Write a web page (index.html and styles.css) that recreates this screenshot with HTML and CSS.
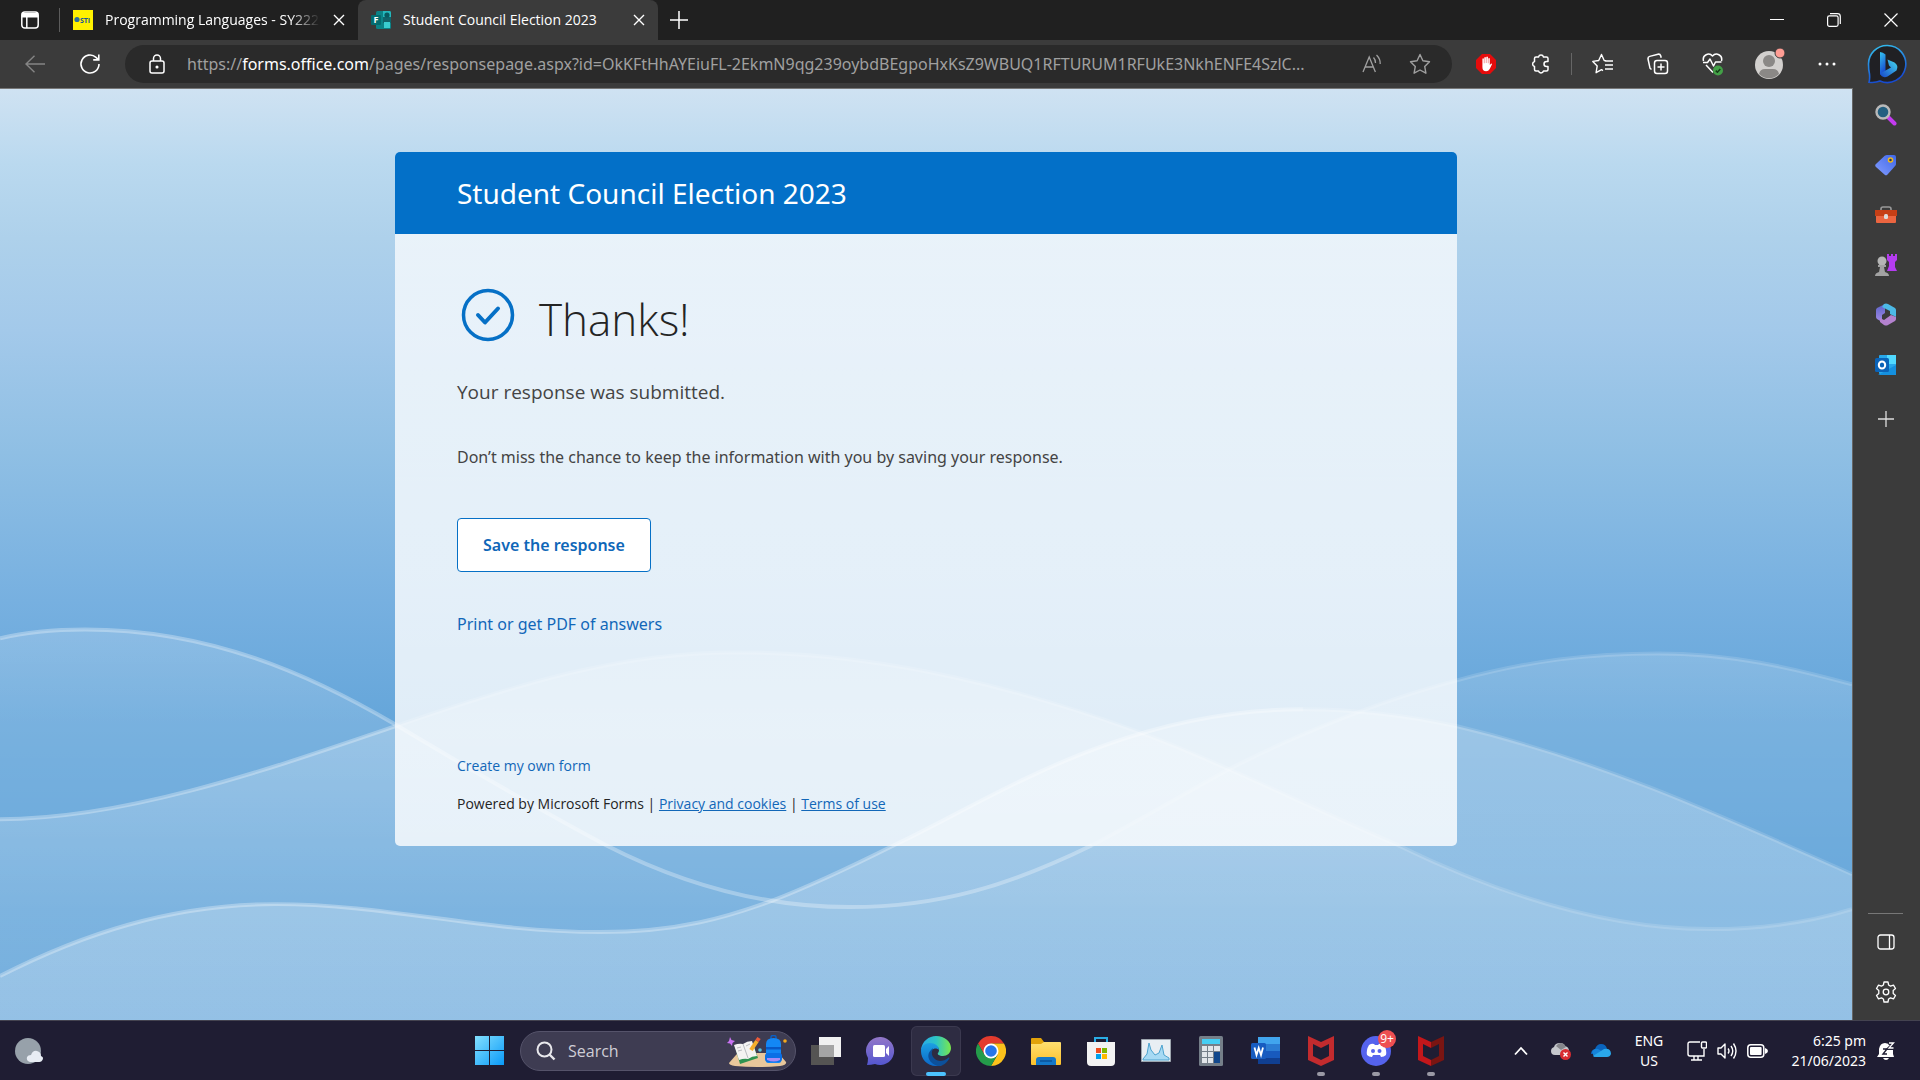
FILE: index.html
```html
<!DOCTYPE html>
<html lang="en">
<head>
<meta charset="utf-8">
<title>Student Council Election 2023</title>
<link rel="stylesheet" href="styles.css">
</head>
<body>
<header class="tabbar">
  <button class="icon-btn tab-actions" aria-label="Tab actions menu"><svg width="20" height="20" viewBox="0 0 20 20" fill="none" stroke="#fff" stroke-width="1.5"><rect x="1.8" y="2" width="16.4" height="16" rx="3"/><path d="M2 4.5h16M2 6h16" stroke-width="3"/><path d="M6.8 7v11"/></svg></button>
  <div class="tab">
    <svg width="20" height="20" viewBox="0 0 20 20"><path fill="#fff100" d="M0 0h20v20H0z"/><circle cx="4" cy="9.500" r="2.600" fill="#2a6e9c"/><text x="12" y="13" class="sti">STI</text></svg>
    <span class="tab-title fade">Programming Languages - SY222</span>
    <button class="icon-btn close" aria-label="Close tab"><svg width="12" height="12" viewBox="0 0 12 12" stroke="#fff" stroke-width="1.4"><path d="M1 1l10 10M11 1L1 11"/></svg></button>
  </div>
  <div class="tab active">
    <svg width="20" height="20" viewBox="0 0 20 20"><rect x="5" y="1" width="15" height="18" rx="1.5" fill="#0b8387"/><path fill="#25b7bc" d="M12 1h6.500q1.500 0 1.500 1.500V7h-8z"/><path fill="#10646b" d="M12 7h8v6h-8z"/><circle cx="16" cy="5" r="2.600" fill="#075a61"/><rect x="13" y="12" width="6" height="6" fill="#39cdd0"/><rect y="5" width="10" height="10" rx="1" fill="#036c70"/><text x="5" y="13" class="glyph">F</text></svg>
    <span class="tab-title">Student Council Election 2023</span>
    <button class="icon-btn close" aria-label="Close tab"><svg width="12" height="12" viewBox="0 0 12 12" stroke="#fff" stroke-width="1.4"><path d="M1 1l10 10M11 1L1 11"/></svg></button>
  </div>
  <button class="icon-btn new-tab" aria-label="New tab"><svg width="18" height="18" viewBox="0 0 18 18" stroke="#fff" stroke-width="1.5"><path d="M9 0v18M0 9h18"/></svg></button>
  <div class="window-controls">
    <button class="icon-btn" aria-label="Minimize"><svg width="14" height="14" viewBox="0 0 14 14"><path d="M0 6.500h14" stroke="#fff"/></svg></button>
    <button class="icon-btn" aria-label="Restore"><svg width="14" height="14" viewBox="0 0 14 14" fill="none" stroke="#fff" stroke-width="1.200"><rect x=".6" y="2.800" width="10.500" height="10.500" rx="1.800"/><path d="M3 .7h7.500q2.800 0 2.800 2.800V11"/></svg></button>
    <button class="icon-btn" aria-label="Close"><svg width="14" height="14" viewBox="0 0 14 14" stroke="#fff" stroke-width="1.200"><path d="M.5.5l13 13M13.500.5l-13 13"/></svg></button>
  </div>
</header>

<nav class="toolbar" aria-label="Browser toolbar">
  <button class="icon-btn back" aria-label="Back"><svg width="20" height="18" viewBox="0 0 20 18" fill="none" stroke="#858585" stroke-width="1.400"><path d="M20 9H1M9.500.8L1 9l8.500 8.200"/></svg></button>
  <button class="icon-btn" aria-label="Refresh"><svg width="22" height="22" viewBox="0 0 22 22" fill="none" stroke="#fff" stroke-width="1.600"><path d="M20 11a9 9 0 1 1-3-6.700l2.500 2.400M19.800 1.500v5.400h-5.600"/></svg></button>
  <div class="address">
    <button class="icon-btn" aria-label="View site information"><svg width="16" height="20" viewBox="0 0 16 20" fill="none" stroke="#fff" stroke-width="1.500"><rect x="1" y="7" width="14" height="12" rx="2"/><path d="M4.500 7V4.500a3.500 3.500 0 0 1 7 0V7"/><circle cx="8" cy="13" r=".8" fill="#fff"/></svg></button>
    <div class="url" role="textbox" aria-label="Address">https://<b>forms.office.com</b>/pages/responsepage.aspx?id=OkKFtHhAYEiuFL-2EkmN9qg239oybdBEgpoHxKsZ9WBUQ1RFTURUM1RFUkE3NkhENFE4SzlC...</div>
    <button class="icon-btn" aria-label="Read aloud"><svg width="20" height="20" viewBox="0 0 20 20" fill="none" stroke="#a0a0a0" stroke-width="1.300"><path d="M1 18L7.200 3l6.200 15M3 13h8.500M11.500 3.500q2.200 2.500 2 5.500M14.500 1q4 4 3.700 9"/></svg></button>
    <button class="icon-btn" aria-label="Add to favorites"><svg width="22" height="22" viewBox="0 0 22 22" fill="none" stroke="#a0a0a0" stroke-width="1.400" stroke-linejoin="round"><path d="M11 1.500l2.900 6.300 6.600.9-4.800 4.700 1.200 6.800L11 17l-5.900 3.200 1.200-6.800L1.500 8.700l6.600-.9z"/></svg></button>
  </div>
  <div class="tools">
    <button class="icon-btn" aria-label="AdBlock"><svg width="20" height="24" viewBox="0 0 20 24"><path fill="#e50c0c" d="M6 2h8l6 6v8l-6 6H6l-6-6V8z"/><path fill="#fff" d="M6.400 8.500V6.700q.7-.9 1.500 0v4.500h.4V5.500q.8-.9 1.600 0v5.500h.4V5q.8-.9 1.600 0v6.200h.4V6.500q.8-.8 1.500 0V13l1.200-1.300q1-.4 1 .5L13.700 17q-1.200 2.300-3.600 2.300-3.700 0-3.700-4.300z"/></svg></button>
    <button class="icon-btn" aria-label="Extensions"><svg width="20" height="22" viewBox="0 0 20 22" fill="none" stroke="#fff" stroke-width="1.500" stroke-linejoin="round"><path d="M5 4h2.500a2.600 2.600 0 0 1 5 0H15.500q1.500 0 1.500 1.500V8.500h-1.500a2.500 2.500 0 1 0 0 5H17v3q0 1.500-1.500 1.500h-3a2.600 2.600 0 0 1-5 0H5q-1.500 0-1.500-1.500v-3a2.600 2.600 0 0 1 0-5v-3Q3.500 4 5 4z"/></svg></button>
    <span class="divider"></span>
    <button class="icon-btn" aria-label="Favorites"><svg width="22" height="22" viewBox="0 0 22 22" fill="none" stroke="#fff" stroke-width="1.400" stroke-linejoin="round"><path d="M14 7.800L12.200 7.500 9.500 1.500 6.700 7.500l-5.900.9 4.400 4.500-1.100 6.800 5.400-3 1.500.9M13 8h8M13 12h8M13 16h8"/></svg></button>
    <button class="icon-btn" aria-label="Collections"><svg width="22" height="22" viewBox="0 0 22 22" fill="none" stroke="#fff" stroke-width="1.500" stroke-linejoin="round"><rect x="7.500" y="7.500" width="13" height="13" rx="2.500"/><path d="M14 10.500v7M10.500 14h7M4.500 16.500L3 15.200 1 6q-.3-2 1.700-2.600L11 1.200q2-.4 2.700 1.500l.5 2"/></svg></button>
    <button class="icon-btn" aria-label="Browser essentials"><svg width="22" height="24" viewBox="0 0 22 24" fill="none" stroke="#fff" stroke-width="1.500" stroke-linejoin="round"><path d="M1.500 9C0 3 7 0 10.500 4 14 0 21 3 19.500 9M1 10.500h4.500L8 7l3.500 7 2-4h6M4 13l7 7.500"/><circle cx="16" cy="18.500" r="5" fill="#43a047" stroke="none"/><path stroke="#173d19" d="M13.800 18.600l1.600 1.600 2.900-3.200"/></svg></button>
    <button class="icon-btn profile" aria-label="Profile"><svg width="30" height="34" viewBox="0 0 30 34"><circle cx="14" cy="18" r="14" fill="#d2d0ce"/><circle cx="14" cy="14" r="6" fill="#8a8886"/><path d="M4 27q1-5 6-5h8q5 0 6 5a14 14 0 0 1-20 0z" fill="#8a8886"/><circle cx="25" cy="6" r="5" fill="#ff9d94" stroke="#3b3b3b"/></svg></button>
    <button class="icon-btn" aria-label="Settings and more"><svg width="18" height="4" viewBox="0 0 18 4" fill="#fff"><circle cx="2" cy="2" r="1.500"/><circle cx="9" cy="2" r="1.500"/><circle cx="16" cy="2" r="1.500"/></svg></button>
  </div>
  <button class="icon-btn bing" aria-label="Discover"><svg width="40" height="40" viewBox="0 0 40 40"><defs><linearGradient id="bg1" x1="0" y1="0" x2=".3" y2="1"><stop offset="0" stop-color="#35c5f0"/><stop offset="1" stop-color="#174bd0"/></linearGradient><linearGradient id="bg2" x1="0" y1="1" x2="1" y2="0"><stop offset="0" stop-color="#1746c9"/><stop offset="1" stop-color="#45d9ee"/></linearGradient></defs><path d="M20 1.500A18.500 18.500 0 1 1 13 37Q8 39 2 38.200 3 35 2.500 30 1.500 26 1.500 20A18.500 18.500 0 0 1 20 1.500z" fill="#202024" stroke="url(#bg1)" stroke-width="1.600"/><path d="M13 8q3 0 5.500 2.500V27L13 31z" fill="url(#bg1)"/><path d="M20.500 15.500l7 3q4.500 3 2 8l-9 6q-3.500 1.500-6-.5L13 29.500l11-6-2-2z" fill="url(#bg2)"/></svg></button>
</nav>

<div class="workspace">
  <main class="page">
    <svg class="waves" viewBox="0 88 1852 932" preserveAspectRatio="none" aria-hidden="true">
      <defs>
        <linearGradient id="wa" gradientUnits="userSpaceOnUse" x1="0" y1="630" x2="0" y2="910"><stop offset="0" stop-color="#fff" stop-opacity=".18"/><stop offset="1" stop-color="#fff" stop-opacity=".02"/></linearGradient>
        <linearGradient id="wb" gradientUnits="userSpaceOnUse" x1="0" y1="650" x2="0" y2="1020"><stop offset="0" stop-color="#fff" stop-opacity=".14"/><stop offset=".2" stop-color="#fff" stop-opacity=".25"/><stop offset=".8" stop-color="#fff" stop-opacity=".12"/><stop offset="1" stop-color="#fff" stop-opacity=".08"/></linearGradient>
        <linearGradient id="wc" gradientUnits="userSpaceOnUse" x1="0" y1="710" x2="0" y2="1020"><stop offset="0" stop-color="#fff" stop-opacity=".26"/><stop offset="1" stop-color="#fff" stop-opacity=".23"/></linearGradient>
      </defs>
      <path fill="url(#wa)" d="M0 638C28 631 56 629 85 629 210 629 310 674 395 724 470 769 540 810 606 845 690 888 770 907 850 907 940 907 1010 885 1092 845 1140 820 1190 790 1229 769 1290 737 1380 700 1457 680 1530 660 1590 653 1658 653 1730 653 1790 667 1852 684V1020H0z"/>
      <path fill="url(#wb)" d="M0 819C130 819 280 765 395 726 520 683 620 652 735 652 890 652 1030 692 1137 731 1170 743 1200 756 1229 769 1290 796 1340 820 1398 845 1490 890 1600 929 1710 929 1760 929 1810 922 1852 909V1020H0z"/>
      <path fill="url(#wc)" d="M0 976C80 935 170 904 276 904 390 904 480 932 600 932 680 932 730 916 771 901 820 882 860 862 894 845 990 800 1120 709 1303 709 1360 709 1410 716 1457 726 1600 760 1720 815 1852 874V1020H0z"/>
      <g class="crest">
        <path d="M0 638C28 631 56 629 85 629 210 629 310 674 395 724 470 769 540 810 606 845 690 888 770 907 850 907 940 907 1010 885 1092 845"/>
        <path d="M0 819C130 819 280 765 395 726"/>
        <path d="M0 976C80 935 170 904 276 904 390 904 480 932 600 932 680 932 730 916 771 901 820 882 860 862 894 845 990 800 1120 709 1303 709"/>
      </g>
      <g class="crest faint">
        <path d="M1092 845C1140 820 1190 790 1229 769 1290 737 1380 700 1457 680 1530 660 1590 653 1658 653 1730 653 1790 667 1852 684"/>
        <path d="M395 726C520 683 620 652 735 652 890 652 1030 692 1137 731 1170 743 1200 756 1229 769 1290 796 1340 820 1398 845 1490 890 1600 929 1710 929 1760 929 1810 922 1852 909"/>
        <path d="M1303 709C1360 709 1410 716 1457 726 1600 760 1720 815 1852 874"/>
      </g>
    </svg>
    <article class="card">
      <h1 class="card-title">Student Council Election 2023</h1>
      <section class="card-body">
        <div class="thanks"><svg width="62" height="62" viewBox="0 0 62 62" fill="none" stroke="#0670c6"><circle cx="31" cy="31" r="24.500" stroke-width="3.500"/><path d="M21 31l7 7.500 13-14" stroke-width="4" stroke-linecap="round" stroke-linejoin="round"/></svg><h2>Thanks!</h2></div>
        <p class="submitted">Your response was submitted.</p>
        <p class="note">Don’t miss the chance to keep the information with you by saving your response.</p>
        <button class="save">Save the response</button>
        <a class="print" href="#print">Print or get PDF of answers</a>
        <footer class="card-footer">
          <a class="create" href="#create">Create my own form</a>
          <p>Powered by Microsoft Forms | <a href="#privacy">Privacy and cookies</a> | <a href="#terms">Terms of use</a></p>
        </footer>
      </section>
    </article>
  </main>

  <aside class="sidebar" aria-label="Sidebar">
    <button class="icon-btn" aria-label="Search"><svg width="22" height="22" viewBox="0 0 22 22"><path d="M13.500 13.500l6 6" stroke="#c43bf0" stroke-width="4" stroke-linecap="round"/><circle cx="8" cy="8" r="6.500" fill="#235f80" stroke="#b9b9b9" stroke-width="2.400"/></svg></button>
    <button class="icon-btn" aria-label="Shopping"><svg width="22" height="22" viewBox="0 0 22 22"><defs><linearGradient id="tg" x1="1" y1="0" x2="0" y2="1"><stop stop-color="#3f68e8"/><stop offset="1" stop-color="#839cff"/></linearGradient></defs><path fill="url(#tg)" d="M12 1h7q2 0 2 2v7q0 1-.7 1.700l-8 9q-1.300 1-2.600 0l-9-8q-1-1.200 0-2.400l9-8.500Q11 1 12 1z"/><circle cx="15.500" cy="6" r="2" fill="#24345c" stroke="#f0b91b" stroke-width="1.500"/></svg></button>
    <button class="icon-btn" aria-label="Tools"><svg width="24" height="20" viewBox="0 0 24 20"><path d="M7 7V4q0-2 2-2h6q2 0 2 2v3" fill="none" stroke="#999" stroke-width="1.600"/><rect x="2" y="6" width="20" height="12" rx="1" fill="#eb6540"/><path fill="#c63f16" d="M1 5h22v6H1z"/><rect x="10" y="9" width="4" height="5" rx="1.500" fill="#dcdcdc"/></svg></button>
    <button class="icon-btn" aria-label="Games"><svg width="24" height="24" viewBox="0 0 24 24"><path fill="#b43cf0" d="M13 1h2v2h2V1h2v2h2V1h2v6l-2 2v5l2 4H13l2-5V9l-2-2z"/><circle cx="8" cy="8" r="4.500" fill="#b5b5b5"/><path fill="#a2a2a2" d="M4 12h8v2h-2l1 5q4 1 4 4H1q0-3 4-4l1-5H4z"/></svg></button>
    <button class="icon-btn" aria-label="Microsoft 365"><svg width="22" height="24" viewBox="0 0 22 24"><defs><linearGradient id="m1" x1="0" y1="0" x2="0" y2="1"><stop stop-color="#5a62c9"/><stop offset="1" stop-color="#a48be6"/></linearGradient></defs><path fill="url(#m1)" d="M10 1v9l-3 2v7l-5-3q-1-1-1-2V7q0-1 1-2z"/><path fill="#4cb9e6" d="M9 1q2-1 4 0l7 4q1 1 1 2v7l-6-3V8L7 4z"/><path fill="#b482cf" d="M21 14v2q0 1-1 2l-7 4q-2 1-4 0l-4-3v-4l4 2 7-5z"/></svg></button>
    <button class="icon-btn" aria-label="Outlook"><svg width="22" height="22" viewBox="0 0 22 22"><rect x="4" y="1" width="17" height="19" rx="1" fill="#28a8ea"/><path fill="#50d9ff" d="M12 1h9v9h-9z"/><path fill="#1490df" d="M3 21l18-10v10z"/><rect y="4" width="14" height="14" rx="1.500" fill="#0a63b8"/><ellipse cx="7" cy="11" rx="3.200" ry="3.600" fill="none" stroke="#fff" stroke-width="2"/></svg></button>
    <button class="icon-btn customize" aria-label="Customize"><svg width="16" height="16" viewBox="0 0 16 16" stroke="#ddd" stroke-width="1.300"><path d="M8 0v16M0 8h16"/></svg></button>
    <div class="sidebar-end">
      <button class="icon-btn" aria-label="Hide sidebar"><svg width="18" height="16" viewBox="0 0 18 16" fill="none" stroke="#fff" stroke-width="1.300"><rect x="1" y="1" width="16" height="14" rx="2.500"/><path d="M12.500 1v14"/></svg></button>
      <button class="icon-btn" aria-label="Settings"><svg width="22" height="22" viewBox="0 0 22 22" fill="none" stroke="#fff" stroke-width="1.300" stroke-linejoin="round"><path d="M9 1h4l.6 3 1.900 1.100 3-1 2 3.400L18.200 9.500v3l2.300 2-2 3.400-3-1L13.600 18 13 21H9l-.6-3-1.900-1.100-3 1-2-3.400 2.300-2v-3l-2.300-2 2-3.400 3 1L8.400 4z"/><circle cx="11" cy="11" r="2.800"/></svg></button>
    </div>
  </aside>
</div>

<footer class="taskbar">
  <div class="task-left"><button class="icon-btn" aria-label="Widgets"><svg width="30" height="30" viewBox="0 0 30 30"><circle cx="14" cy="15" r="13" fill="#97a1aa"/><path fill="#e8edf4" d="M16 26q-4-1-3-5 1-2 4-2 2-5 6-4 4 1 4 5 3 1 1.500 4-1 2-3 2z"/></svg></button></div>
  <div class="task-center">
    <button class="icon-btn start" aria-label="Start"><svg width="29" height="29" viewBox="0 0 29 29"><defs><linearGradient id="ws" x1="0" y1="0" x2="1" y2="1"><stop stop-color="#83e0ff"/><stop offset="1" stop-color="#0a9af8"/></linearGradient></defs><path fill="url(#ws)" d="M0 0h14v14H0zM15 0h14v14H15zM0 15h14v14H0zM15 15h14v14H15z"/></svg></button>
    <label class="search">
      <svg width="20" height="20" viewBox="0 0 20 20" fill="none" stroke="#e8e8ec" stroke-width="2"><circle cx="8.500" cy="8.500" r="7"/><path d="M13.500 13.500l5 5" stroke-width="2.400"/></svg>
      <input type="text" placeholder="Search" aria-label="Search">
      <svg width="60" height="32" viewBox="0 0 60 32"><path fill="#e8c79b" d="M2 28L9 20q1-2 4-2h36q3 0 4 2l6 7q1 3-6 4Q30 33 8 31q-6-1-6-3z"/><path fill="#2f9350" d="M8 12l18-3 5 14-18 6z"/><path fill="#f4f3f2" d="M7 10q5-2 9-1 4-3 9-3l5 15q-5 0-9 3-4-1-9 1z"/><path stroke="#b9bcc0" fill="none" d="M16 9l5 14M10 13l4-1M11 16l4-1M19 11l4-2"/><path stroke="#f4ad2b" stroke-width="4" d="M24 15l6-9"/><path stroke="#ec5b3a" stroke-width="4" d="M30 6l2-3"/><path fill="none" stroke="#0b5ec4" stroke-width="1.500" d="M44 4V2q0-1.500 2.500-1.500T49 2v2"/><path fill="#1387f5" d="M39 9q0-6 7.500-6T54 9v17q0 2-2 2H41q-2 0-2-2z"/><path fill="#0858c6" d="M39 12h15v2.500H39z"/><rect x="38" y="18" width="17" height="9" rx="3" fill="#0b6fe6"/><path fill="#a68bf5" d="M40 23h13v2q-6 3-13 0z"/><path fill="#c973f2" d="M3 2l1.500 3L8 6 5.500 8 5 11 3 8.500 0 8l2-2z"/><circle cx="33" cy="15" r="1.800" fill="#56c1df"/><circle cx="58" cy="6" r="1.800" fill="#f3a91d"/></svg>
    </label>
    <div class="apps">
      <button class="app" aria-label="Task view"><svg width="30" height="30" viewBox="0 0 30 30"><path fill="#555453" d="M0 9h23v20H0z"/><path fill="#f1f1f1" d="M8 1h22v20H8z"/><path fill="#a5a5a5" d="M8 9h15v12H8z"/></svg></button>
      <button class="app" aria-label="Chat"><svg width="30" height="30" viewBox="0 0 30 30"><defs><linearGradient id="ch" x1="0" y1="0" x2="0" y2="1"><stop stop-color="#9377c8"/><stop offset="1" stop-color="#5457d0"/></linearGradient></defs><path fill="url(#ch)" d="M15 1A14 14 0 1 1 9 28q-4 1-8 1 1-3 1-7A14 14 0 0 1 15 1z"/><rect x="7" y="9" width="12" height="12" rx="1.500" fill="#fff"/><path fill="#fff" d="M20 13l3-3v10l-3-3z"/></svg></button>
      <button class="app current" aria-label="Microsoft Edge"><svg width="30" height="30" viewBox="0 0 30 30"><defs><linearGradient id="e1"><stop stop-color="#2aa9e8"/><stop offset=".5" stop-color="#2cc4c6"/><stop offset="1" stop-color="#7ae84b"/></linearGradient><linearGradient id="e2" x1="0" y1="0" x2="0" y2="1"><stop stop-color="#1ca0e2"/><stop offset="1" stop-color="#0b68c8"/></linearGradient></defs><path fill="url(#e1)" d="M0 14C1 5 8 0 15 0c9 0 15 6 15 12 0 5-4 8-8 8-4 0-6-2-5-3 2-3 1-6-3-7C8 8 3 10 0 14z"/><path fill="url(#e2)" d="M0 15C0 10 4 7 9 7c5 0 9 3 9 7-2-2-5-2-7 0-4 5 1 14 11 15Q19 30 15 30C6 30 0 23 0 15z"/><path fill="#0c509a" d="M12 13c-3 5 0 11 7 12 3 0 6-1 8-3 1-1 2 0 1 1-3 5-7 7-11 7-8-2-13-10-7-16 1-1 2-2 2-1z"/></svg></button>
      <button class="app" aria-label="Google Chrome"><svg width="30" height="30" viewBox="0 0 30 30"><path fill="#e33b2e" d="M2 7.500A15 15 0 0 1 28 7.500H15L8.500 19z"/><path fill="#fcc21b" d="M28 7.500A15 15 0 0 1 15 30l6.500-11.200L15 7.500z"/><path fill="#249b4a" d="M2 7.500A15 15 0 0 0 15 30l6.500-11.200H8.500z"/><circle cx="15" cy="15" r="7.500" fill="#fff"/><circle cx="15" cy="15" r="5.800" fill="#2676ea"/></svg></button>
      <button class="app" aria-label="File Explorer"><svg width="30" height="30" viewBox="0 0 30 30"><path fill="#e2a20a" d="M0 3q0-1 1-1h9l3 4h16v8H0z"/><defs><linearGradient id="fo" x1="0" y1="0" x2="0" y2="1"><stop stop-color="#ffdf70"/><stop offset="1" stop-color="#fcc12b"/></linearGradient></defs><path fill="url(#fo)" d="M0 8h10l3-2h16q1 0 1 1v21q0 1-1 1H1q-1 0-1-1z"/><path fill="#1478c8" d="M5 29v-5q0-3 3-3h14q3 0 3 3v5z"/><path stroke="#07488c" stroke-width="1.200" d="M9 25h12"/></svg></button>
      <button class="app" aria-label="Microsoft Store"><svg width="30" height="30" viewBox="0 0 30 30"><path fill="#f3f3f3" d="M1 6h28v20q0 4-4 4H5q-4 0-4-4z"/><path d="M9 6V2h12v4" fill="none" stroke="#2aade5" stroke-width="2"/><path fill="#f04e20" d="M10 12h5v5h-5z"/><path fill="#7fb900" d="M16 12h5v5h-5z"/><path fill="#00a2ed" d="M10 18h5v5h-5z"/><path fill="#ffb900" d="M16 18h5v5h-5z"/></svg></button>
      <button class="app" aria-label="Task Manager"><svg width="30" height="30" viewBox="0 0 30 30"><path fill="#e8eef3" stroke="#9da5ae" d="M.5 3.500h29v22H.5z"/><path fill="#a7daf4" stroke="#4da3cf" d="M2 23l4-5 2-11 2 7 4 5 4-2 3-8 2 10 5 3v2H2z"/></svg></button>
      <button class="app" aria-label="Calculator"><svg width="24" height="30" viewBox="0 0 24 30"><rect width="24" height="30" rx="1.500" fill="#757f89"/><path fill="#45cef4" d="M3 3h18v5H3z"/><path fill="#e2e6ea" d="M3 10h5v5H3zM9 10h5v5H9zM15 10h6v5h-6zM3 16h5v5H3zM9 16h5v5H9zM3 22h5v5H3zM9 22h5v5H9z"/><path fill="#12488c" d="M15 16h6v11h-6z"/></svg></button>
      <button class="app" aria-label="Word"><svg width="30" height="30" viewBox="0 0 30 30"><path fill="#41a5ee" d="M7 1h22v7H7z"/><path fill="#2b7cd3" d="M7 8h22v7H7z"/><path fill="#185abd" d="M7 15h22v7H7z"/><path fill="#103f91" d="M7 22h22v6H7z"/><rect y="7" width="15" height="16" rx="1.500" fill="#175cc0"/><path d="M3.500 11.500l2 7.500L7.700 12 10 19l2-7.500" fill="none" stroke="#fff" stroke-width="1.800"/></svg></button>
      <button class="app open" aria-label="McAfee"><svg width="26" height="30" viewBox="0 0 26 30"><path fill="#c32b2e" d="M0 0l13 6L26 0v24l-13 6-13-6zM5 8v12l8 4 8-4V8l-8 4z"/></svg></button>
      <button class="app open" aria-label="Discord"><svg width="30" height="30" viewBox="0 0 30 30"><circle cx="15" cy="15" r="15" fill="#5563ed"/><path fill="#fff" d="M8 9q3-2 5-1l1 1h3l1-1q3-1 5 1 3 5 2 10-2 2-5 2l-1-2h-7l-1 2q-3 0-5-2-1-5 2-10z"/><circle cx="12" cy="15" r="2" fill="#5563ed"/><circle cx="18.500" cy="15" r="2" fill="#5563ed"/></svg><span class="badge">9+</span></button>
      <button class="app open" aria-label="McAfee LiveSafe"><svg width="26" height="30" viewBox="0 0 26 30"><path fill="#c3171b" d="M0 0l13 6v6L5 8v12l8 4v6L0 24z"/><path fill="#7a1512" d="M26 0L13 6v6l8-4v12l-8 4v6l13-6z"/></svg></button>
    </div>
  </div>
  <div class="tray">
    <button class="icon-btn" aria-label="Show hidden icons"><svg width="14" height="10" viewBox="0 0 14 10" fill="none" stroke="#fff" stroke-width="1.800"><path d="M1 8.500l6-6.500 6 6.500"/></svg></button>
    <button class="icon-btn" aria-label="OneDrive error"><svg width="20" height="18" viewBox="0 0 20 18"><path fill="#c5c7cc" d="M4 13q-4 0-4-4 0-3 3-4 1-4 6-4 4 0 5 3 4 1 4 5v4z"/><path fill="#85868b" d="M5 4q2-3 5-3 4 1 5 4l-5 3z"/><circle cx="14.500" cy="12.500" r="5.500" fill="#d92c31"/><path stroke="#fff" stroke-width="1.400" d="M12.500 10.500l4 4m0-4l-4 4"/></svg></button>
    <button class="icon-btn" aria-label="OneDrive"><svg width="20" height="14" viewBox="0 0 20 14"><path fill="#0a64bd" d="M0 10q0-4 4-5 2-5 6-5 5 0 6 5l-9 4z"/><path fill="#1683d9" d="M1 8q2-4 6-3l10 6-14 2z"/><path fill="#2aa7ea" d="M2 12l11-7q7-1 7 5-1 3-4 3H5q-2 0-3-1z"/></svg></button>
    <button class="tray-text lang"><span>ENG</span><span>US</span></button>
    <button class="icon-btn system" aria-label="Network, volume and battery">
      <svg width="20" height="20" viewBox="0 0 20 20" fill="none" stroke="#fff" stroke-width="1.400"><path d="M13 1H3Q1 1 1 3v10q0 2 2 2h14V8M4 19h11M7 15v4M11 15v4"/><rect x="14.500" y="1" width="5" height="6" rx="1"/></svg>
      <svg width="20" height="18" viewBox="0 0 20 18" fill="none" stroke="#fff" stroke-width="1.400"><path d="M1 6h3l4-4v14l-4-4H1z" stroke-linejoin="round"/><path d="M11 6.500q2 2.500 0 5M14 4q3.500 5 0 10M16.500 1.500q5 7.500 0 15"/></svg>
      <svg width="21" height="14" viewBox="0 0 21 14"><rect x=".8" y=".8" width="16" height="12.400" rx="3" fill="none" stroke="#fff" stroke-width="1.500"/><rect x="3" y="3" width="11.600" height="8" rx="1" fill="#fff"/><path fill="#fff" d="M18 4q3 1 3 3t-3 3z"/></svg>
    </button>
    <button class="tray-text clock"><span>6:25 pm</span><span>21/06/2023</span></button>
    <button class="icon-btn" aria-label="Notifications"><svg width="18" height="20" viewBox="0 0 18 20"><path fill="#fff" d="M0 16l2-3V8q1-6 6-6l4 1 4 4v6l1 3zM6 17h6q-1 2-3 2t-3-2z"/><path d="M6 8h4l-4 5h4" stroke="#1f1d33" stroke-width="1.400" fill="none"/><path d="M11.500 2.500h5l-5 5h5" stroke="#1f1d33" stroke-width="3" fill="none"/><path d="M12 2h4.500L12 7h4.500" stroke="#fff" stroke-width="1.300" fill="none"/></svg></button>
  </div>
</footer>
</body>
</html>
```
FILE: styles.css
```css
* { box-sizing: border-box; }

body {
  margin: 0;
  min-height: 100vh;
  display: flex;
  flex-direction: column;
  font-family: "Open Sans", "Noto Sans", sans-serif;
  font-size: 14px;
  color: #fff;
  background: #3b3b3b;
}

h1, h2, p { margin: 0; font-weight: 400; }
button { font: inherit; color: inherit; border: 0; padding: 0; background: none; }
svg { display: block; flex: none; }

.icon-btn { display: flex; align-items: center; justify-content: center; flex: none; }

/* Tab strip */
.tabbar { display: flex; height: 40px; background: #202020; }
.tab-actions { width: 60px; background: linear-gradient(#5c5c5c, #5c5c5c) right center / 1px 24px no-repeat; }
.tab { display: flex; align-items: center; gap: 12px; width: 298px; padding: 0 12px 0 13px; }
.tab.active { width: 300px; border-radius: 8px 8px 0 0; background: #3b3b3b; }
.tab-title { flex: 1; min-width: 0; overflow: hidden; white-space: nowrap; line-height: 20px; }
.fade { -webkit-mask-image: linear-gradient(90deg, #000 86%, transparent); mask-image: linear-gradient(90deg, #000 86%, transparent); }
.close { width: 14px; }
.new-tab { width: 42px; }
.window-controls { display: flex; margin-left: auto; padding-right: 1px; }
.window-controls .icon-btn { width: 57px; }
.sti { font: 700 7px "Open Sans", sans-serif; fill: #17549a; text-anchor: middle; }
.glyph { font: 700 9px "Open Sans", sans-serif; fill: #fff; text-anchor: middle; }

/* Toolbar */
.toolbar { display: flex; align-items: center; height: 48px; padding-left: 7px; background: #3b3b3b; }
.toolbar > .icon-btn { width: 55px; }
.address { flex: 1; min-width: 0; display: flex; align-items: center; height: 38px; margin-left: 8px; padding: 0 8px; border-radius: 19px; background: #2a2a2a; }
.address .icon-btn { width: 48px; }
.url { flex: 1; min-width: 0; margin-left: 6px; overflow: hidden; white-space: nowrap; font-family: "Noto Sans", "Open Sans", sans-serif; font-size: 16px; line-height: 24px; color: #a0a0a0; }
.url b { font-weight: 400; color: #fff; }
.tools { display: flex; align-items: center; margin-left: 6px; }
.tools .icon-btn { width: 55px; }
.tools .profile { width: 59px; }
.divider { width: 1px; height: 22px; margin: 0 3px; background: #666; }
.toolbar > .bing { width: 66px; }

/* Page and sidebar */
.workspace { flex: 1; display: flex; }
.page {
  position: relative;
  flex: 1;
  padding: 63px 0 0;
  border-top: 1px solid #777;
  border-right: 1px solid #666;
  background: linear-gradient(#cfe2f2, #bad9ef 8%, #aed1eb 16%, #a3c9ea 26%, #8fbfe4 39%, #77b0e0 55%, #65a6da 68%);
}
.waves { position: absolute; inset: 0; width: 100%; height: 100%; }
.crest { fill: none; stroke: #fff; stroke-width: 4px; stroke-opacity: .3; }
.faint { stroke-opacity: .14; }

.card { position: relative; width: 1062px; max-width: 100%; margin: 0 auto; border-radius: 5px; overflow: hidden; background: linear-gradient(rgba(255, 255, 255, .71), rgba(255, 255, 255, .8) 60%); }
.card-title { padding: 21px 62px; font-family: "Noto Sans", "Open Sans", sans-serif; font-size: 28px; line-height: 40px; background: #0370c8; }
.card-body { display: flex; flex-direction: column; align-items: flex-start; padding: 50px 62px 32px; color: #444; }
.thanks { display: flex; gap: 20px; color: #242424; }
.thanks h2 { padding-top: 4px; font-size: 44px; font-weight: 350; line-height: 62px; }
.submitted { margin-top: 28px; font-size: 19px; line-height: 28px; }
.note { margin-top: 38px; font-family: "Noto Sans", "Open Sans", sans-serif; font-size: 16px; line-height: 26px; }
.save { height: 54px; margin-top: 48px; padding: 0 25px; border: 1px solid #0670c6; border-radius: 4px; background: #fff; color: #0f67b8; font-family: "Noto Sans", "Open Sans", sans-serif; font-size: 16px; font-weight: 600; }
.card a { color: #1267b8; }
.card .print, .card .create { text-decoration: none; }
.print { margin-top: 39px; font-family: "Noto Sans", "Open Sans", sans-serif; font-size: 16px; line-height: 26px; }
.card-footer { margin-top: 119px; font-size: 14px; line-height: 20px; color: #242424; }
.card-footer p { margin-top: 18px; }

.sidebar { display: flex; flex-direction: column; align-items: center; width: 67px; padding: 2px 2px 0 0; background: #3b3b3b; }
.sidebar .icon-btn { width: 40px; height: 50px; }
.sidebar .customize { margin-top: 4px; }
.sidebar-end { display: flex; flex-direction: column; align-items: center; width: 35px; margin-top: auto; padding: 3px 0; border-top: 1px solid #777; }

/* Taskbar */
.taskbar { display: flex; align-items: center; height: 60px; border-top: 1px solid #444350; background: #1f1d33; }
.task-left { flex: 1; padding-left: 14px; }
.task-center { display: flex; align-items: center; padding-right: 6px; }
.start { width: 62px; }
.search { display: flex; align-items: center; gap: 12px; width: 276px; height: 40px; padding: 0 8px 0 15px; border: 1px solid #55536a; border-radius: 20px; background: #3e3c52; }
.search input { flex: 1; min-width: 0; padding: 0; border: 0; outline: 0; background: none; color: #fff; font: 16px "Open Sans", sans-serif; }
.search input::placeholder { color: #cfced6; opacity: 1; }
.apps { display: flex; gap: 5px; margin-left: 5px; }
.app { position: relative; display: flex; align-items: center; justify-content: center; width: 50px; height: 50px; border-radius: 6px; }
.current { background: #2e2c42; box-shadow: inset 0 0 0 1px #3b394f; }
.current::after, .open::after { content: ""; position: absolute; bottom: 0; left: 50%; width: 8px; height: 4px; margin-left: -4px; border-radius: 2px; background: #9a99a5; }
.current::after { width: 20px; margin-left: -10px; background: #4cc2ff; }
.badge { position: absolute; top: 4px; right: 5px; width: 18px; height: 18px; border-radius: 9px; background: #ee4f52; font-size: 12px; line-height: 18px; text-align: center; }
.tray { flex: 1; display: flex; align-items: center; justify-content: flex-end; padding-right: 14px; }
.tray .icon-btn { width: 40px; }
.tray .system { width: auto; gap: 10px; padding: 0 10px; }
.tray-text { display: flex; flex-direction: column; font-family: "Noto Sans", "Open Sans", sans-serif; font-size: 14px; line-height: 20px; }
.lang { align-items: center; width: 56px; }
.clock { align-items: flex-end; min-width: 88px; }
```
